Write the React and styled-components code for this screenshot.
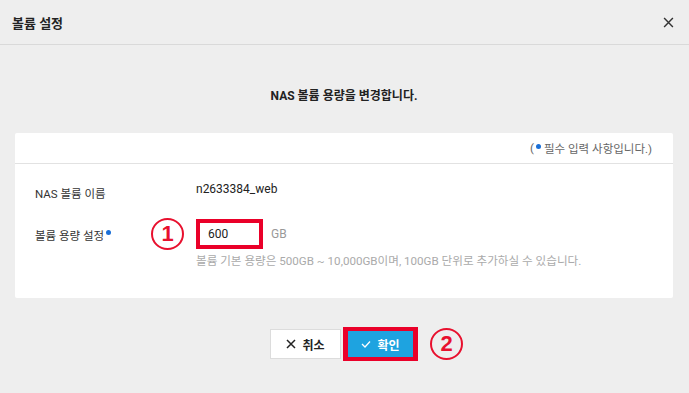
import React, { useState } from 'react';
import styled, { createGlobalStyle } from 'styled-components';

const GlobalStyle = createGlobalStyle`
  html, body {
    margin: 0;
    padding: 0;
    background: #eeeeee;
  }
  body {
    font-family: Roboto, "Noto Sans CJK KR", sans-serif;
    font-size: 12px;
    color: #222;
  }
`;

const Modal = styled.div`
  width: 689px;
  height: 393px;
  background: #eeeeee;
  display: flex;
  flex-direction: column;
`;

const Header = styled.div`
  height: 44px;
  padding: 0 15px 0 12px;
  display: flex;
  align-items: center;
  justify-content: space-between;
  border-bottom: 1px solid #d9d9d9;
`;

const Title = styled.h2`
  margin: 0;
  font-size: 13px;
  font-weight: 700;
  color: #222;
`;

const CloseButton = styled.button`
  border: 0;
  background: none;
  padding: 0;
  width: 12px;
  height: 12px;
  display: flex;
  align-items: center;
  justify-content: center;
  cursor: pointer;
`;

const Body = styled.div`
  padding: 0 16px 0 15px;
  display: flex;
  flex-direction: column;
`;

const Message = styled.p`
  margin: 43px 0 29px;
  text-align: center;
  font-size: 12px;
  font-weight: 700;
  line-height: 16px;
  color: #222;
`;

const Card = styled.div`
  background: #fff;
  border-radius: 2px;
`;

const CardHead = styled.div`
  height: 30px;
  padding: 0 21px;
  display: flex;
  align-items: center;
  justify-content: flex-end;
  border-bottom: 1px solid #e2e2e2;
  font-size: 11.5px;
  color: #666;
`;

const Dot = styled.span`
  display: inline-block;
  width: 5px;
  height: 5px;
  border-radius: 50%;
  background: #1a6fd6;
  margin: 0 ${p => p.$gap || 1}px ${p => p.$raise || 4}px 2px;
  vertical-align: middle;
`;

const CardBody = styled.div`
  padding: 17px 20px 30px;
  display: grid;
  grid-template-columns: 161px 1fr;
  row-gap: 17px;
  align-items: start;
`;

const Label = styled.div`
  font-size: 11.5px;
  line-height: 16px;
  color: #333;
  padding-top: ${p => p.$offset || 0}px;
`;

const Value = styled.div`
  font-size: 12px;
  line-height: 16px;
  color: #222;
`;

const Field = styled.div`
  display: flex;
  flex-direction: column;
  gap: 5px;
`;

const InputLine = styled.div`
  display: flex;
  align-items: center;
  gap: 8px;
`;

const InputWrap = styled.div`
  position: relative;
`;

const SizeInput = styled.input`
  box-sizing: border-box;
  width: 67px;
  height: 30px;
  border: 4px solid #ea0029;
  padding: 0 8px;
  font-family: inherit;
  font-size: 12px;
  color: #222;
  outline: none;
`;

const Unit = styled.span`
  font-size: 12px;
  color: #999;
`;

const Hint = styled.div`
  font-size: 11.6px;
  line-height: 14px;
  color: #aaa;
`;

const Marker = styled.span`
  position: absolute;
  top: 50%;
  transform: translateY(-50%);
  left: ${p => p.$left}px;
  width: 33px;
  height: 32px;
  box-sizing: border-box;
  border: 2px solid #e8102e;
  border-radius: 50%;
  display: flex;
  align-items: center;
  justify-content: center;
  color: #e8102e;
  font-family: "Liberation Sans", Arial, sans-serif;
  font-weight: 700;
  font-size: 22px;
  line-height: 1;
`;

const Actions = styled.div`
  margin-top: 29px;
  display: flex;
  justify-content: center;
  align-items: center;
  gap: 2px;
`;

const Button = styled.button`
  box-sizing: border-box;
  display: flex;
  align-items: center;
  justify-content: center;
  gap: 6px;
  font-family: inherit;
  font-size: 12px;
  font-weight: 700;
  cursor: pointer;
  position: relative;
  ${p => p.$primary ? `
    width: 75px;
    height: 34px;
    background: #1ea3e0;
    color: #fff;
    border: 4px solid #ea0029;
    border-width: 4px 5px;
  ` : `
    width: 71px;
    height: 30px;
    background: #fff;
    color: #222;
    border: 1px solid #dcdcdc;
  `}
`;

const XIcon = ({ size = 10, color = '#222', width = 1.4 }) => (
  <svg width={size} height={size} viewBox="0 0 10 10">
    <path d="M1 1L9 9M9 1L1 9" stroke={color} strokeWidth={width} fill="none" />
  </svg>
);

const CheckIcon = () => (
  <svg width="10" height="8" viewBox="0 0 10 8">
    <path d="M1 4L4 7L9 1.5" stroke="#fff" strokeWidth="1.3" fill="none" />
  </svg>
);

export default function App() {
  const [size, setSize] = useState('600');

  return (
    <>
      <GlobalStyle />
      <Modal>
        <Header>
          <Title>볼륨 설정</Title>
          <CloseButton aria-label="닫기">
            <XIcon size={11} color="#333" width={1.3} />
          </CloseButton>
        </Header>
        <Body>
          <Message>NAS 볼륨 용량을 변경합니다.</Message>
          <Card>
            <CardHead>
              (<Dot $gap={3} />필수 입력 사항입니다.)
            </CardHead>
            <CardBody>
              <Label $offset={5}>NAS 볼륨 이름</Label>
              <Value>n2633384_web</Value>
              <Label $offset={9}>
                볼륨 용량 설정<Dot $raise={9} />
              </Label>
              <Field>
                <InputLine>
                  <InputWrap>
                    <Marker $left={-45}>1</Marker>
                    <SizeInput value={size} onChange={e => setSize(e.target.value)} />
                  </InputWrap>
                  <Unit>GB</Unit>
                </InputLine>
                <Hint>볼륨 기본 용량은 500GB ~ 10,000GB이며, 100GB 단위로 추가하실 수 있습니다.</Hint>
              </Field>
            </CardBody>
          </Card>
          <Actions>
            <Button>
              <XIcon size={10} color="#222" width={1.5} />
              취소
            </Button>
            <Button $primary>
              <CheckIcon />
              확인
              <Marker $left={82}>2</Marker>
            </Button>
          </Actions>
        </Body>
      </Modal>
    </>
  );
}
